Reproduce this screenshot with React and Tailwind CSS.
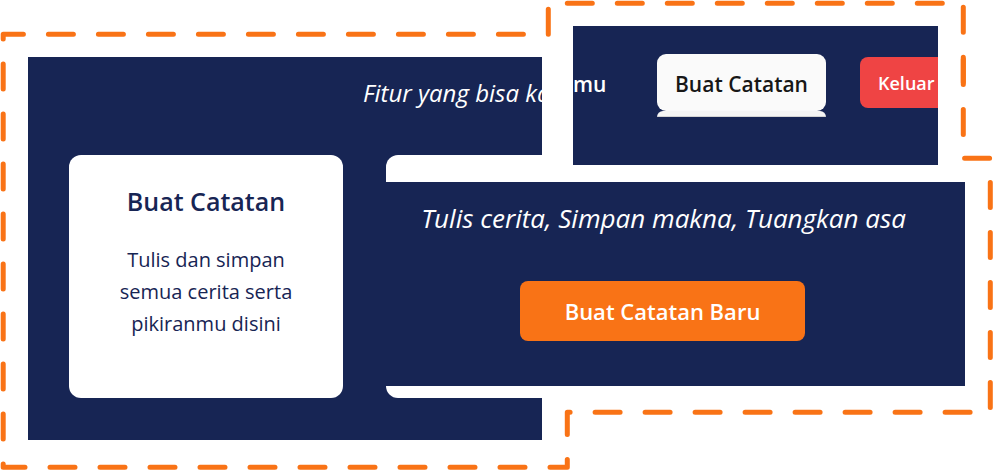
function DashedOutline() {
  return (
    <svg
      className="absolute inset-0 h-full w-full"
      viewBox="0 0 993 470"
      preserveAspectRatio="none"
      fill="none"
      stroke="#f97316"
      strokeWidth="5"
      strokeLinecap="round"
      strokeLinejoin="round"
      aria-hidden="true"
    >
      <path d="M548.3 34.2V3.2H963.3V84.5" strokeDasharray="25 25" />
      <path
        d="M963.3 59.5V158.2H990.3V412.3H567.3V467.2H3.2V34.2H548"
        strokeDasharray="25 25"
      />
    </svg>
  );
}

function FeaturesPanel() {
  return (
    <section className="col-start-2 col-end-4 row-start-2 row-end-7 overflow-hidden bg-[#172554] pt-5">
      <h2 className="pl-[335px] text-2xl leading-8 whitespace-nowrap text-white italic">
        Fitur yang bisa ka
      </h2>
      <div className="mt-[46px] flex gap-[43px] pl-[41px]">
        <article className="h-[243px] w-[274px] shrink-0 rounded-xl bg-white px-10 pt-7 text-center text-[#172554]">
          <h3 className="text-[25px] leading-9 font-semibold whitespace-nowrap">Buat Catatan</h3>
          <p className="mt-[25px] text-xl leading-8">
            Tulis dan simpan semua cerita serta pikiranmu disini
          </p>
        </article>
        <article className="h-[243px] w-[274px] shrink-0 rounded-xl bg-white" />
      </div>
    </section>
  );
}

function NavPanel() {
  return (
    <nav className="col-start-5 row-start-1 row-end-4 mt-[26px] flex items-start overflow-hidden bg-[#172554] text-white">
      <a href="#catatanmu" className="mt-11 w-[84px] shrink-0 text-[21px] leading-7 font-semibold">
        mu
      </a>
      <div className="mt-7 w-[169px] shrink-0">
        <button className="h-[57px] w-full rounded-[9px] bg-neutral-50 pt-1 text-[21px] font-semibold whitespace-nowrap text-neutral-900">
          Buat Catatan
        </button>
        <div className="h-[6px] rounded-t-md border-b border-[#d4d4d4] bg-neutral-100" />
      </div>
      <button className="mt-[31px] ml-[34px] h-[51px] w-[98px] shrink-0 rounded-lg bg-[#ef4444] pl-[18px] text-left text-lg font-semibold">
        Keluar
      </button>
    </nav>
  );
}

function HeroPanel() {
  return (
    <section className="z-10 col-start-3 col-end-7 row-start-5 flex flex-col items-center bg-[#172554] pt-5 text-white">
      <p className="pr-6 text-[26px] leading-8 whitespace-nowrap italic">
        Tulis cerita, Simpan makna, Tuangkan asa
      </p>
      <button className="mt-[47px] mr-[26px] h-[60px] w-[285px] rounded-lg bg-[#f97316] text-[22px] font-semibold">
        Buat Catatan Baru
      </button>
    </section>
  );
}

export default function App() {
  return (
    <main className="relative grid w-full max-w-[993px] grid-cols-[28px_358px_156px_31px_1fr_27px_28px] grid-rows-[57px_98px_10px_17px_204px_54px_30px] bg-white font-['Open_Sans','Noto_Sans',sans-serif]">
      <DashedOutline />
      <FeaturesPanel />
      <NavPanel />
      <HeroPanel />
    </main>
  );
}
